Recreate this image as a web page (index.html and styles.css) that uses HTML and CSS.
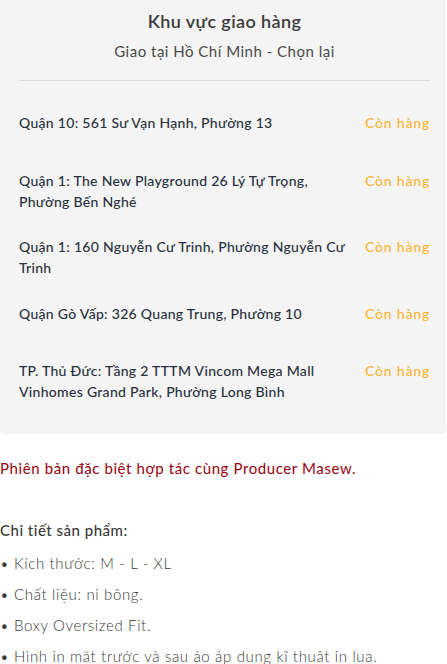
FILE: index.html
```html
<!DOCTYPE html>
<html lang="vi">
<head>
<meta charset="utf-8">
<title>Khu vực giao hàng</title>
<link rel="stylesheet" href="styles.css">
</head>
<body>
<section class="delivery">
  <h2 class="delivery-title">Khu vực giao hàng</h2>
  <p class="delivery-sub">Giao tại Hồ Chí Minh - Chọn lại</p>
  <div class="divider"></div>
  <ul class="stores">
    <li class="store"><span class="addr">Quận 10: 561 Sư Vạn Hạnh, Phường 13</span><span class="stock">Còn hàng</span></li>
    <li class="store"><span class="addr">Quận 1: The New Playground 26 Lý Tự Trọng, Phường Bến Nghé</span><span class="stock">Còn hàng</span></li>
    <li class="store"><span class="addr">Quận 1: 160 Nguyễn Cư Trinh, Phường Nguyễn Cư Trinh</span><span class="stock">Còn hàng</span></li>
    <li class="store"><span class="addr">Quận Gò Vấp: 326 Quang Trung, Phường 10</span><span class="stock">Còn hàng</span></li>
    <li class="store"><span class="addr">TP. Thủ Đức: Tầng 2 TTTM Vincom Mega Mall Vinhomes Grand Park, Phường Long Bình</span><span class="stock">Còn hàng</span></li>
  </ul>
</section>
<section class="desc">
  <p class="special">Phiên bản đặc biệt hợp tác cùng Producer Masew.</p>
  <p class="detail-title">Chi tiết sản phẩm:</p>
  <ul class="details">
    <li>• Kích thước: M - L - XL</li>
    <li>• Chất liệu: nỉ bông.</li>
    <li>• Boxy Oversized Fit.</li>
    <li>• Hình in mặt trước và sau áo áp dụng kĩ thuật in lụa.</li>
  </ul>
</section>
</body>
</html>
```
FILE: styles.css
```css
* { box-sizing: border-box; }
html, body { margin: 0; padding: 0; background: #fff; }
body {
  font-family: Lato, "Noto Sans", sans-serif;
  color: #333;
  width: 447px;
}
.delivery {
  background: #f4f4f4;
  width: 446px;
  border-radius: 0 0 5px 5px;
  padding: 9px 16px 32px 19px;
}
.delivery-title {
  margin: 0;
  text-align: center;
  font-size: 18px;
  line-height: 24px;
  font-weight: 600;
  letter-spacing: 0.4px;
  color: #3b3b3b;
}
.delivery-sub {
  margin: 7px 0 0;
  text-align: center;
  font-size: 15px;
  line-height: 22px;
  font-weight: 400;
  letter-spacing: 0.5px;
  color: #4a4a4a;
}
.divider {
  height: 1px;
  background: #dedede;
  margin: 18px 0 0;
}
.stores {
  list-style: none;
  margin: 0;
  padding: 31px 0 0;
  display: flex;
  flex-direction: column;
  gap: 24.5px;
}
.store {
  display: flex;
  justify-content: space-between;
  align-items: flex-start;
  gap: 12px;
  min-height: 33px;
  font-size: 14px;
  line-height: 21px;
}
.addr {
  color: #28313d;
  font-weight: 500;
  letter-spacing: 0.3px;
  max-width: 342px;
}
.stock {
  color: #fbb534;
  font-weight: 500;
  letter-spacing: 0.8px;
  white-space: nowrap;
}
.desc { padding: 22px 0 0; }
.special {
  margin: 0;
  color: #9a0010;
  font-size: 15px;
  line-height: 24px;
  letter-spacing: 0.6px;
}
.detail-title {
  margin: 38px 0 0;
  font-size: 15px;
  line-height: 24px;
  font-weight: 500;
  letter-spacing: 0.5px;
  color: #3a3a3a;
}
.details {
  list-style: none;
  margin: 9px 0 0;
  padding: 0;
  display: flex;
  flex-direction: column;
  gap: 7px;
}
.details li {
  font-size: 15px;
  line-height: 24px;
  font-weight: 300;
  letter-spacing: 0.65px;
  color: #3a3a3a;
}
```
